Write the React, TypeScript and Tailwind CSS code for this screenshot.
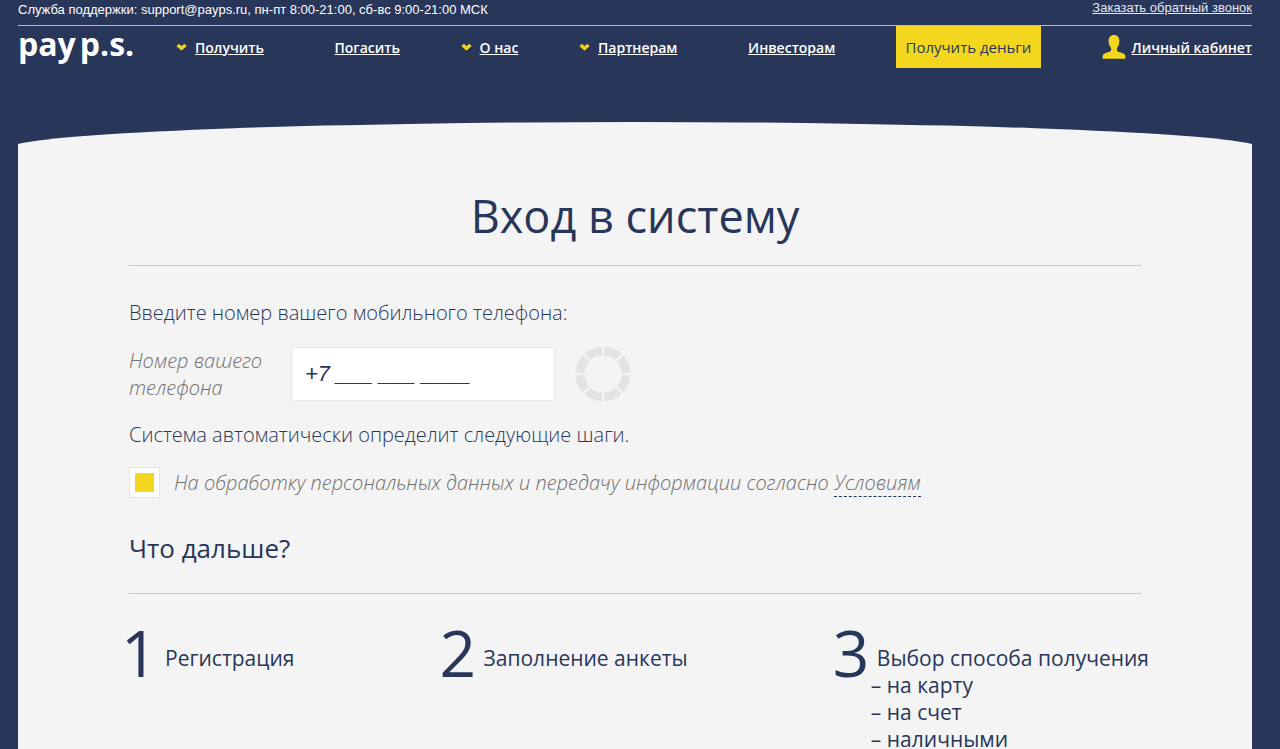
import { useState } from "react";

type NavItem = { label: string; hasMenu: boolean };

const navItems: NavItem[] = [
  { label: "Получить", hasMenu: true },
  { label: "Погасить", hasMenu: false },
  { label: "О нас", hasMenu: true },
  { label: "Партнерам", hasMenu: true },
  { label: "Инвесторам", hasMenu: false },
];

const payoutOptions = ["на карту", "на счет", "наличными"];

function Chevron() {
  return (
    <svg width="12" height="9" viewBox="0 0 12 9" aria-hidden="true">
      <path d="M2.4 2.4 6 5.6 9.6 2.4" fill="none" stroke="#1c2440" strokeWidth="3.6" transform="translate(0.8 0.8)" />
      <path d="M1.6 2 5.6 5.4 9.6 2" fill="none" stroke="#e9d12a" strokeWidth="3.6" />
    </svg>
  );
}

function UserIcon() {
  return (
    <svg width="24" height="24" viewBox="0 0 24 24" fill="#f3d71f" aria-hidden="true">
      <path d="M12 0C8.900 0 6.600 2.100 6.600 5.400c0 1.100.1 2 .3 2.800.3 1.900 1.100 3.600 2.200 4.700v2.200c0 .8-.6 1.300-1.500 1.600l-3.900 1.300C1.500 18.700.500 20 .400 22.200c0 1 .5 1.500 1.500 1.500h20.200c1 0 1.500-.5 1.500-1.500-.1-2.200-1.100-3.500-3.300-4.200l-3.900-1.300c-.9-.3-1.500-.8-1.500-1.600v-2.200c1.100-1.100 1.900-2.800 2.200-4.700.2-.8.3-1.700.3-2.800C17.400 2.100 15.100 0 12 0Z" />
    </svg>
  );
}

function Spinner() {
  return (
    <svg width="56" height="56" viewBox="0 0 56 56" aria-hidden="true">
      <circle
        cx="28"
        cy="28"
        r="23"
        fill="none"
        stroke="#e3e3e3"
        strokeWidth="9"
        pathLength="80"
        strokeDasharray="8.800 1.200"
        strokeDashoffset="-0.600"
      />
    </svg>
  );
}

function Step({ number, title, options }: { number: number; title: string; options?: string[] }) {
  return (
    <li className="flex items-start">
      <span className="w-[38px] shrink-0 text-[64px] leading-[68px]">{number}</span>
      <div className="pt-[26px] text-[21px] leading-[27px]">
        <p className="pl-[6px]">{title}</p>
        {options && (
          <ul>
            {options.map((option) => (
              <li key={option}>– {option}</li>
            ))}
          </ul>
        )}
      </div>
    </li>
  );
}

export default function App() {
  const [phone, setPhone] = useState("+7 ___ ___ ____");
  const [agreed, setAgreed] = useState(true);

  return (
    <div className="flex min-h-screen flex-col bg-[#283659] pr-7 pl-[18px] font-['Open_Sans','Noto_Sans',sans-serif]">
      <header className="shrink-0">
        <div className="flex h-[26px] items-start justify-between border-b border-[#d8c530] font-['Liberation_Sans',Arial,sans-serif] text-[13px] text-white">
          <p className="pt-[2px] leading-4">Служба поддержки: support@payps.ru, пн-пт 8:00-21:00, сб-вс 9:00-21:00 МСК</p>
          <a href="#callback" className="leading-4 text-[#e3e7f0] underline">
            Заказать обратный звонок
          </a>
        </div>
        <div className="flex h-24 items-start">
          <a href="#home" className="flex w-[158px] shrink-0 gap-1 text-[32px] leading-[36px] font-bold text-white">
            <span>pay</span>
            <span>p.s.</span>
          </a>
          <nav className="flex h-[42px] flex-1 items-center justify-between text-[14px] font-semibold text-white">
            {navItems.map(({ label, hasMenu }) =>
              hasMenu ? (
                <a key={label} href="#menu" className="flex items-center gap-[7px] underline">
                  <Chevron />
                  {label}
                </a>
              ) : (
                <a key={label} href="#menu" className="pl-[10px] underline">
                  {label}
                </a>
              ),
            )}
            <button type="button" className="h-[42px] w-[145px] bg-[#f3d71f] text-[15px] font-normal text-[#283659]">
              Получить деньги
            </button>
            <a href="#account" className="flex items-center gap-[6px] underline">
              <UserIcon />
              Личный кабинет
            </a>
          </nav>
        </div>
      </header>

      <svg viewBox="0 0 1234 22" preserveAspectRatio="none" className="block h-[22px] w-full shrink-0" aria-hidden="true">
        <path d="M0 22A628 27 0 0 1 1234 22Z" fill="#f4f4f4" />
      </svg>
      <main className="flex-1 bg-[#f4f4f4] px-[111px] text-[#283659]">
        <h1 className="pt-10 text-center text-[45px] leading-[64px]">Вход в систему</h1>
        <hr className="mt-[17px] border-[#c4c4c4]" />

        <form className="text-[20px] font-light">
          <p className="mt-[33px] leading-7">Введите номер вашего мобильного телефона:</p>
          <div className="mt-[19px] flex items-center">
            <label htmlFor="phone" className="w-[162px] leading-[27px] text-[#6f6f6f] italic">
              Номер вашего телефона
            </label>
            <input
              id="phone"
              type="tel"
              value={phone}
              onChange={(e) => setPhone(e.target.value)}
              className="h-[54px] w-[264px] rounded-[2px] border border-[#e6e6e6] bg-white px-[13px] font-['Liberation_Sans',Arial,sans-serif] text-[22px] font-normal text-[#283659] italic outline-none"
            />
            <span className="ml-5">
              <Spinner />
            </span>
          </div>
          <p className="mt-[19px] leading-7">Система автоматически определит следующие шаги.</p>
          <div className="mt-[18px] flex items-center gap-[14px] text-[#6f6f6f] italic">
            <input
              id="agree"
              type="checkbox"
              checked={agreed}
              onChange={(e) => setAgreed(e.target.checked)}
              className="grid h-[31px] w-[31px] shrink-0 appearance-none place-items-center border border-[#e6e6e6] bg-white before:h-[19px] before:w-[19px] checked:before:bg-[#f3d71f]"
            />
            <p className="leading-7">
              <label htmlFor="agree">На обработку персональных данных и передачу информации согласно </label>
              <a href="#terms" className="border-b border-dashed border-[#283659]">
                Условиям
              </a>
            </p>
          </div>
        </form>

        <h2 className="mt-8 text-[26px] leading-9">Что дальше?</h2>
        <hr className="mt-[27px] border-[#c4c4c4]" />
        <ol className="-mx-2 mt-[25px] flex justify-between">
          <Step number={1} title="Регистрация" />
          <Step number={2} title="Заполнение анкеты" />
          <Step number={3} title="Выбор способа получения" options={payoutOptions} />
        </ol>
      </main>
    </div>
  );
}
